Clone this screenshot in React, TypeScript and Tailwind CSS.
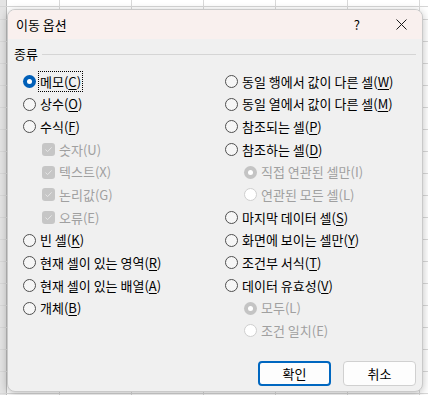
import React from "react";

type RS = "on" | "off" | "don" | "doff";

function Radio({ s }: { s: RS }) {
  if (s === "on")
    return (
      <span className="flex h-[13px] w-[13px] shrink-0 items-center justify-center rounded-full bg-[#005fb8]">
        <span className="h-[5px] w-[5px] rounded-full bg-white" />
      </span>
    );
  if (s === "don")
    return (
      <span className="flex h-[13px] w-[13px] shrink-0 items-center justify-center rounded-full bg-[#c4c4c4]">
        <span className="h-[5px] w-[5px] rounded-full bg-white" />
      </span>
    );
  if (s === "doff")
    return <span className="h-[13px] w-[13px] shrink-0 rounded-full border border-[#cfcfcf] bg-white" />;
  return <span className="h-[13px] w-[13px] shrink-0 rounded-full border border-[#4f4f4f] bg-[#f6f6f6]" />;
}

function Check() {
  return (
    <span className="flex h-[13px] w-[13px] shrink-0 items-center justify-center rounded-[3px] bg-[#c6c6c6]">
      <svg width="9" height="9" viewBox="0 0 9 9">
        <path d="M1.5 4.6 L3.6 6.6 L7.6 2.4" fill="none" stroke="#e6e6e6" strokeWidth="1" />
      </svg>
    </span>
  );
}

function Label({ t, k, dis, focus }: { t: string; k: string; dis?: boolean; focus?: boolean }) {
  return (
    <span
      className={
        "whitespace-nowrap px-[1px] leading-[15px] " +
        (dis ? "text-[#a0a0a0] " : "text-black ") +
        (focus ? "outline outline-1 outline-dotted outline-black" : "")
      }
    >
      {t}(
      {dis ? k : <span className="underline underline-offset-[2px]">{k}</span>})
    </span>
  );
}

type Item = { kind: "r" | "c"; s?: RS; t: string; k: string; indent?: boolean; focus?: boolean };

function Row({ it }: { it: Item }) {
  const dis = it.kind === "c" || it.s === "don" || it.s === "doff";
  return (
    <div className={"flex h-[22.7px] items-center gap-[2px] " + (it.indent ? "pl-[19px]" : "")}>
      {it.kind === "c" ? <Check /> : <Radio s={it.s!} />}
      <span className="ml-[1px]">
        <Label t={it.t} k={it.k} dis={dis} focus={it.focus} />
      </span>
    </div>
  );
}

const left: Item[] = [
  { kind: "r", s: "on", t: "메모", k: "C", focus: true },
  { kind: "r", s: "off", t: "상수", k: "O" },
  { kind: "r", s: "off", t: "수식", k: "F" },
  { kind: "c", t: "숫자", k: "U", indent: true },
  { kind: "c", t: "텍스트", k: "X", indent: true },
  { kind: "c", t: "논리값", k: "G", indent: true },
  { kind: "c", t: "오류", k: "E", indent: true },
  { kind: "r", s: "off", t: "빈 셀", k: "K" },
  { kind: "r", s: "off", t: "현재 셀이 있는 영역", k: "R" },
  { kind: "r", s: "off", t: "현재 셀이 있는 배열", k: "A" },
  { kind: "r", s: "off", t: "개체", k: "B" },
];

const right: Item[] = [
  { kind: "r", s: "off", t: "동일 행에서 값이 다른 셀", k: "W" },
  { kind: "r", s: "off", t: "동일 열에서 값이 다른 셀", k: "M" },
  { kind: "r", s: "off", t: "참조되는 셀", k: "P" },
  { kind: "r", s: "off", t: "참조하는 셀", k: "D" },
  { kind: "r", s: "don", t: "직접 연관된 셀만", k: "I", indent: true },
  { kind: "r", s: "doff", t: "연관된 모든 셀", k: "L", indent: true },
  { kind: "r", s: "off", t: "마지막 데이터 셀", k: "S" },
  { kind: "r", s: "off", t: "화면에 보이는 셀만", k: "Y" },
  { kind: "r", s: "off", t: "조건부 서식", k: "T" },
  { kind: "r", s: "off", t: "데이터 유효성", k: "V" },
  { kind: "r", s: "don", t: "모두", k: "L", indent: true },
  { kind: "r", s: "doff", t: "조건 일치", k: "E", indent: true },
];

function Grid() {
  const xs = [59, 131, 203, 275, 347, 419];
  const ys: number[] = [];
  for (let y = 19; y < 400; y += 22) ys.push(y);
  return (
    <svg className="absolute inset-0" width="428" height="395">
      <rect x="0" y="0" width="7" height="395" fill="#e4e4e4" />
      <line x1="6.5" y1="0" x2="6.5" y2="395" stroke="#bdbdbd" />
      <line x1="0" y1="6.5" x2="428" y2="6.5" stroke="#d6d6d6" />
      {xs.map((x) => (
        <line key={x} x1={x + 0.5} y1="0" x2={x + 0.5} y2="395" stroke="#d9d9d9" />
      ))}
      {ys.map((y) => (
        <line key={y} x1="0" y1={y + 0.5} x2="428" y2={y + 0.5} stroke="#d9d9d9" />
      ))}
    </svg>
  );
}

export default function App() {
  return (
    <div className="relative h-[395px] w-[428px] overflow-hidden bg-white pl-[7px] pt-[9px] font-['Noto_Sans_CJK_KR','Noto_Sans',sans-serif] text-[13px]">
      <Grid />
      <div className="relative flex h-[383px] w-[416px] flex-col overflow-hidden rounded-[8px] border border-[#c9c9c9] bg-[#f0f0f0] shadow-[0_2px_8px_rgba(0,0,0,0.25)]">
        <div className="flex h-[29px] shrink-0 items-center bg-[#f9f0ee] pl-[8px] pr-[12px]">
          <span className="text-[13px] text-black">이동 옵션</span>
          <span className="ml-auto mr-[36px] text-[13px] text-black">?</span>
          <svg width="11" height="11" viewBox="0 0 11 11" className="mr-[3px]">
            <path d="M0.5 0.5 L10.5 10.5 M10.5 0.5 L0.5 10.5" stroke="#1a1a1a" strokeWidth="1" />
          </svg>
        </div>
        <div className="flex flex-1 flex-col px-[6px] pt-[7px]">
          <div className="flex h-[16px] items-center">
            <span className="text-black">종류</span>
            <div className="ml-[4px] h-px flex-1 bg-[#d5d5d5]" />
          </div>
          <div className="mt-[8px] flex">
            <div className="w-[202px] pl-[9px]">
              {left.map((it, i) => (
                <Row key={i} it={it} />
              ))}
            </div>
            <div className="flex-1 pl-[9px]">
              {right.map((it, i) => (
                <Row key={i} it={it} />
              ))}
            </div>
          </div>
          <div className="mt-auto mb-[5px] flex justify-end gap-[12px]">
            <button className="h-[25px] w-[73px] rounded-[4px] border-2 border-[#0067c0] bg-[#fdfdfd] text-[13px] text-black">
              확인
            </button>
            <button className="h-[25px] w-[73px] rounded-[4px] border border-[#d0d0d0] bg-[#fdfdfd] text-[13px] text-black">
              취소
            </button>
          </div>
        </div>
      </div>
    </div>
  );
}
